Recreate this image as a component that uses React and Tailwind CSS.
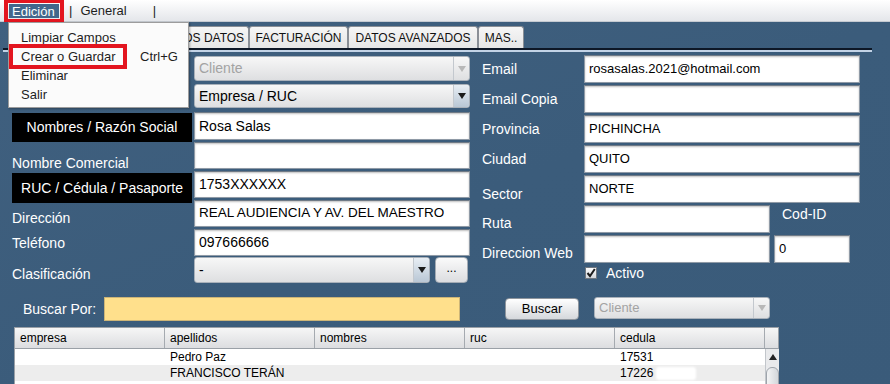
import React from "react";

const LBL = "text-white text-[14px] leading-none";

function Input({ value = "", className = "", text = "text-[14px]" }) {
  return (
    <div
      className={`bg-white border border-[#8f9aa6] border-t-[#6f7a86] shadow-[inset_0_1px_2px_rgba(0,0,0,0.25)] flex items-center px-[4px] text-black ${text} whitespace-nowrap overflow-hidden ${className}`}
    >
      {value}
    </div>
  );
}

function Combo({ value, disabled = false, className = "", blueArrow = false, text = "text-[14px]" }) {
  return (
    <div
      className={`rounded-[3px] border border-[#a9b1ba] bg-gradient-to-b from-[#f7f7f7] to-[#dedfe1] flex items-stretch overflow-hidden ${className}`}
    >
      <div
        className={`flex-1 flex items-center px-[4px] ${text} whitespace-nowrap ${
          disabled ? "text-[#a3a3a3]" : "text-black"
        }`}
      >
        {value}
      </div>
      <div
        className={`w-[16px] flex items-center justify-center border-l border-[#c3c8ce] ${
          blueArrow ? "bg-gradient-to-b from-[#e8eef4] to-[#b9c7d5]" : ""
        }`}
      >
        <svg width="8" height="6" viewBox="0 0 8 6">
          <path d="M0 0 H8 L4 6 Z" fill={disabled ? "#b8b8b8" : "#1a1a1a"} />
        </svg>
      </div>
    </div>
  );
}

function BlackLabel({ children, className = "" }) {
  return (
    <div
      className={`bg-black text-white text-[14px] flex items-center justify-center w-[180px] ${className}`}
    >
      {children}
    </div>
  );
}

function Tab({ children, w }) {
  return (
    <div
      className={`${w} h-[22px] flex items-center justify-center rounded-t-[3px] border border-b-0 border-[#8a8f96] bg-gradient-to-b from-[#f6f6f6] to-[#e6e6e6] text-[12px] text-[#111] whitespace-nowrap`}
    >
      {children}
    </div>
  );
}

export default function App() {
  const rows = [
    { a: "", b: "Pedro Paz", c: "", d: "", e: "17531", bg: "bg-white" },
    { a: "", b: "FRANCISCO TERÁN", c: "", d: "", e: "17226", bg: "bg-[#ededed]", blur: true },
  ];
  return (
    <div
      className="relative w-[890px] h-[384px] overflow-hidden flex flex-col"
      style={{ fontFamily: '"Comic Sans MS", "Liberation Sans", sans-serif' }}
    >
      {/* Menu bar */}
      <div
        className="h-[22px] shrink-0 flex items-center bg-gradient-to-b from-white to-[#e4e6ea] border-b border-[#c5cad1] text-[13px] text-[#1e1e1e]"
        style={{ fontFamily: '"Liberation Sans", sans-serif' }}
      >
        <div className="ml-[4px] self-start w-[60px] h-[23px] border-[4px] border-t-[3px] border-[#e3151f] p-[1px] flex">
          <div className="flex-1 bg-[#42678c] text-white text-[13px] flex items-center pl-[3px] leading-none">
            Edición
          </div>
        </div>
        <span className="ml-[5px]">|</span>
        <span className="ml-[8px]">General</span>
        <span className="ml-[26px]">|</span>
      </div>

      {/* Main panel */}
      <div className="flex-1 bg-gradient-to-br from-[#40607f] via-[#3b5c7b] to-[#3a5b7a] flex flex-col">
        {/* Tabs */}
        <div className="pt-[4px] pl-[3px] pr-[18px]">
          <div className="flex items-end pl-[7px]">
            <Tab w="w-[70px]" />
            <Tab w="w-[73px]" />
            <Tab w="w-[96px]">OTROS DATOS</Tab>
            <Tab w="w-[99px]">FACTURACIÓN</Tab>
            <Tab w="w-[130px]">DATOS AVANZADOS</Tab>
            <Tab w="w-[46px]">MAS..</Tab>
          </div>
          <div className="h-[2px] bg-[#0d1726]" />
          <div className="h-[2px] bg-[#c3d3e6]" />
        </div>

        {/* Form */}
        <div className="flex pl-[12px] pt-[3px]">
          {/* Left */}
          <div className="flex flex-col w-[458px]">
            <div className="flex mt-[1px] h-[25px]">
              <div className="w-[182px]" />
              <Combo value="Cliente" disabled className="w-[276px] h-[25px]" />
            </div>
            <div className="flex mt-[3px] h-[24px]">
              <div className="w-[182px]" />
              <Combo value="Empresa / RUC" blueArrow className="w-[276px] h-[24px]" />
            </div>
            <div className="flex mt-[4px] h-[28px]">
              <BlackLabel className="h-[29px] mt-[1px]">Nombres / Razón Social</BlackLabel>
              <div className="w-[2px]" />
              <Input value="Rosa Salas" className="w-[276px] h-[28px]" />
            </div>
            <div className="flex mt-[2px] h-[27px]">
              <div className="w-[182px] flex items-end">
                <span className={`${LBL} mb-[-1px]`}>Nombre Comercial</span>
              </div>
              <Input className="w-[276px] h-[27px]" />
            </div>
            <div className="flex mt-[2px] h-[27px]">
              <BlackLabel className="h-[30px] mt-[2px]">RUC / Cédula / Pasaporte</BlackLabel>
              <div className="w-[2px]" />
              <Input value="1753XXXXXX" className="w-[276px] h-[27px]" />
            </div>
            <div className="flex mt-[2px] h-[27px]">
              <div className="w-[182px] flex items-end">
                <span className={`${LBL} mb-[2px]`}>Dirección</span>
              </div>
              <Input value="REAL AUDIENCIA Y AV. DEL MAESTRO" className="w-[276px] h-[27px]" text="text-[13.5px]" />
            </div>
            <div className="flex mt-[2px] h-[27px]">
              <div className="w-[182px] flex items-end">
                <span className={`${LBL} mb-[6px]`}>Teléfono</span>
              </div>
              <Input value="097666666" className="w-[276px] h-[27px]" />
            </div>
            <div className="flex mt-[1px] h-[26px]">
              <div className="w-[182px] flex items-end">
                <span className={`${LBL} mb-[2px]`}>Clasificación</span>
              </div>
              <Combo value="-" blueArrow className="w-[236px] h-[26px]" />
              <div className="ml-[5px] w-[33px] h-[26px] rounded-[4px] border border-[#a3abb4] bg-gradient-to-b from-[#fafafa] to-[#dcdde0] flex items-center justify-center text-[12px] text-black pb-[4px]">
                ...
              </div>
            </div>
          </div>

          {/* Right */}
          <div className="flex flex-col ml-[12px]">
            {[
              ["Email", "rosasalas.2021@hotmail.com", 0],
              ["Email Copia", "", 0],
              ["Provincia", "PICHINCHA", 0],
              ["Ciudad", "QUITO", 0],
              ["Sector", "NORTE", 10],
            ].map(([l, v, off], i) => (
              <div key={l} className={`flex h-[28px] ${i ? "mt-[2px]" : ""}`}>
                <div className="w-[102px] flex items-center">
                  <span className={LBL} style={{ marginTop: off }}>
                    {l}
                  </span>
                </div>
                <Input value={v} className="w-[276px] h-[28px]" text="text-[13px]" />
              </div>
            ))}
            <div className="flex h-[28px] mt-[2px]">
              <div className="w-[102px] flex items-center">
                <span className={`${LBL} mt-[8px]`}>Ruta</span>
              </div>
              <Input className="w-[186px] h-[28px]" />
              <span className={`${LBL} ml-[12px] mt-[2px] text-[13px]`}>Cod-ID</span>
            </div>
            <div className="flex h-[28px] mt-[2px]">
              <div className="w-[102px] flex items-center">
                <span className={`${LBL} mt-[8px]`}>Direccion Web</span>
              </div>
              <Input className="w-[186px] h-[28px]" />
              <Input value="0" className="ml-[4px] w-[76px] h-[28px]" text="text-[13px]" />
            </div>
            <div className="flex items-center h-[16px] mt-[2px] ml-[102px]">
              <div className="ml-[1px] w-[12px] h-[12px] border border-[#6f7780] bg-gradient-to-b from-[#fdfdfd] to-[#d3d6da] flex items-center justify-center">
                <svg width="10" height="10" viewBox="0 0 10 10">
                  <path d="M1.5 5 L4 8 L8.8 1" stroke="#1c1c1c" strokeWidth="2" fill="none" />
                </svg>
              </div>
              <span className={`${LBL} ml-[9px]`}>Activo</span>
            </div>
          </div>
        </div>

        {/* Search row */}
        <div className="flex items-center mt-[14px] h-[24px]">
          <span className={`${LBL} ml-[23px] w-[81px]`}>Buscar Por:</span>
          <div className="w-[356px] h-[24px] bg-[#ffe08c] border border-[#cdb577]" />
          <div
            className="ml-[45px] w-[74px] h-[22px] rounded-[4px] border border-[#8e959d] bg-gradient-to-b from-[#ffffff] to-[#d5d8dc] flex items-center justify-center text-[13px] text-black"
            style={{ fontFamily: '"Liberation Sans", sans-serif' }}
          >
            Buscar
          </div>
          <Combo
            value="Cliente"
            disabled
            className="ml-[15px] w-[176px] h-[22px] self-start"
            text="text-[13px]"
          />
        </div>

        {/* Table */}
        <div
          className="ml-[14px] mt-[6px] w-[765px] border border-[#9aa0a7] bg-white text-[12px] text-black"
          style={{ fontFamily: '"Liberation Sans", sans-serif' }}
        >
          <div className="flex h-[21px] bg-gradient-to-b from-[#f6f6f6] to-[#dcdde0] border-b border-[#9aa0a7]">
            {["empresa", "apellidos", "nombres", "ruc", "cedula"].map((h) => (
              <div key={h} className="w-[150px] border-r border-[#a5aab0] flex items-center pl-[5px]">
                {h}
              </div>
            ))}
            <div className="flex-1" />
          </div>
          <div className="flex">
            <div className="flex-1">
              {rows.map((r, i) => (
                <div key={i} className={`flex h-[16px] ${r.bg} leading-[16px]`}>
                  <div className="w-[150px] pl-[5px]">{r.a}</div>
                  <div className="w-[150px] pl-[5px]">{r.b}</div>
                  <div className="w-[150px] pl-[5px]">{r.c}</div>
                  <div className="w-[150px] pl-[5px]">{r.d}</div>
                  <div className="w-[150px] pl-[5px] flex items-center">
                    {r.e}
                    {r.blur && <span className="ml-[3px] w-[40px] h-[13px] bg-white rounded-[3px] blur-[1px]" />}
                  </div>
                </div>
              ))}
              <div className="h-[16px] bg-white" />
            </div>
            <div className="w-[15px] bg-[#e9eaec] border-l border-[#c2c6cb] flex flex-col items-center">
              <div className="h-[16px] w-full flex items-center justify-center">
                <svg width="8" height="6" viewBox="0 0 8 6">
                  <path d="M0 6 H8 L4 0 Z" fill="#222" />
                </svg>
              </div>
              <div className="mt-[2px] w-[13px] h-[30px] rounded-t-[6px] border border-[#9ea4ab] bg-gradient-to-r from-[#f3f4f5] to-[#d4d7db]" />
            </div>
          </div>
        </div>
      </div>

      {/* Dropdown menu (overlay) */}
      <div
        className="absolute left-[8px] top-[22px] w-[181px] h-[86px] bg-[#fbfbfb] border border-[#9c9c9c] shadow-[1px_1px_2px_rgba(0,0,0,0.3)] text-[13px] text-[#1e1e1e] pt-[5px]"
        style={{ fontFamily: '"Liberation Sans", sans-serif' }}
      >
        {["Limpiar Campos", "Crear o Guardar", "Eliminar", "Salir"].map((t, i) => (
          <div key={t} className="h-[19px] flex items-center pl-[12px] relative">
            <span>{t}</span>
            {i === 1 && (
              <>
                <span className="absolute left-[131px]">Ctrl+G</span>
                <div className="absolute left-[0px] top-[-3px] w-[118px] h-[25px] border-[4px] border-[#e3151f]" />
              </>
            )}
          </div>
        ))}
      </div>
    </div>
  );
}
